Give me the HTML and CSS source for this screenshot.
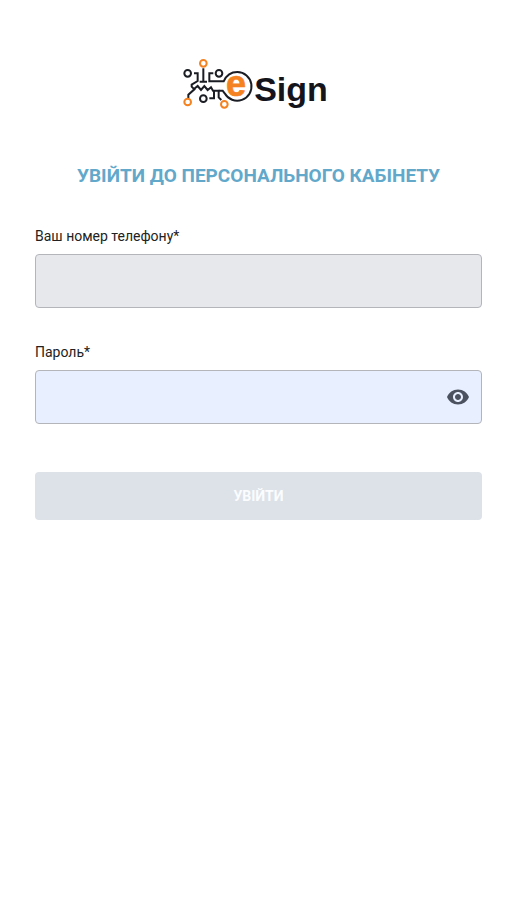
FILE: index.html
```html
<!DOCTYPE html>
<html lang="uk">
<head>
<meta charset="utf-8">
<meta name="viewport" content="width=device-width, initial-scale=1">
<title>eSign</title>
<link rel="stylesheet" href="styles.css">
</head>
<body>
<main class="login">
  <div class="logo">
    <svg class="logo-mark" viewBox="21 15 216 165" aria-hidden="true">
      <g class="trace">
        <circle cx="38" cy="70" r="10"/>
        <circle cx="132" cy="70" r="10"/>
        <circle cx="85" cy="146" r="10"/>
        <path d="M57 70H68V93L50 104V110L58 118L40 134V145"/>
        <path d="M57 117L68 108L78 120L88 108L98 120L108 112L114 122H131V142L139 150"/>
        <path d="M85 55V94M74 95H96"/>
        <path d="M115 70H103V94H146C154 76 168 66 187 66A43 43 0 1 1 149 130L143 122H131"/>
        <path d="M117 122V145H103"/>
      </g>
      <g class="node">
        <circle cx="85" cy="40" r="10"/>
        <circle cx="38" cy="156" r="10"/>
        <circle cx="148" cy="163" r="10"/>
      </g>
      <text class="logo-e" x="183" y="137" text-anchor="middle">e</text>
    </svg>
    <span class="logo-text">Sign</span>
  </div>
  <h1 class="title">УВІЙТИ ДО ПЕРСОНАЛЬНОГО КАБІНЕТУ</h1>
  <form class="form">
    <div class="field">
      <label for="phone">Ваш номер телефону*</label>
      <input class="input" id="phone" type="tel">
    </div>
    <div class="field">
      <label for="password">Пароль*</label>
      <div class="password">
        <input class="input input-filled" id="password" type="password">
        <button class="reveal" type="button" aria-label="Показати пароль">
          <svg viewBox="0 0 24 24" aria-hidden="true"><path d="M12 4.500C7 4.500 2.730 7.610 1 12c1.730 4.390 6 7.500 11 7.500s9.270-3.110 11-7.500c-1.730-4.390-6-7.500-11-7.500zM12 17c-2.760 0-5-2.240-5-5s2.240-5 5-5 5 2.240 5 5-2.240 5-5 5zm0-8c-1.660 0-3 1.340-3 3s1.340 3 3 3 3-1.340 3-3-1.340-3-3-3z"/></svg>
        </button>
      </div>
    </div>
    <button class="submit" type="submit">УВІЙТИ</button>
  </form>
</main>
</body>
</html>
```
FILE: styles.css
```css
* {
  box-sizing: border-box;
}

body {
  margin: 0;
  background: #fff;
  color: #222;
  font-family: Roboto, "Liberation Sans", sans-serif;
}

.login {
  padding: 55px 33px 32px 35px;
}

.logo {
  display: flex;
  justify-content: center;
  align-items: center;
  padding-right: 7px;
}

.logo-mark {
  width: 72px;
  height: 55px;
}

.trace,
.node {
  fill: none;
  stroke: #1b1d24;
  stroke-width: 6;
}

.node {
  stroke: #f58220;
}

.logo-e {
  fill: #f58220;
  font: bold 108px "Liberation Sans", sans-serif;
  stroke: #f58220;
  stroke-width: 2;
}

.logo-text {
  padding-top: 12px;
  color: #14151c;
  font: bold 34px/40px "Liberation Sans", sans-serif;
}

.title {
  margin: 54px 0 0;
  color: #62a8cb;
  font-size: 19px;
  font-weight: 700;
  line-height: 24px;
  text-align: center;
}

.form {
  display: flex;
  flex-direction: column;
  margin-top: 39px;
}

.field {
  margin-bottom: 35px;
}

.field label {
  display: block;
  margin-bottom: 8px;
  font-size: 14px;
  line-height: 19px;
}

.input {
  display: block;
  width: 100%;
  height: 54px;
  padding: 0 16px;
  border: 1px solid #b3b5ba;
  border-radius: 4px;
  background: #e6e8ec;
  font: inherit;
}

.password {
  position: relative;
}

.input-filled {
  padding-right: 48px;
  background: #e8effe;
}

.reveal {
  position: absolute;
  top: 0;
  right: 12px;
  bottom: 0;
  display: flex;
  align-items: center;
  padding: 0;
  border: 0;
  background: none;
}

.reveal svg {
  width: 24px;
  height: 24px;
  fill: #4c5260;
}

.submit {
  height: 48px;
  margin-top: 13px;
  border: 0;
  border-radius: 4px;
  background: #dde2e8;
  color: #fafcfe;
  font-family: inherit;
  font-size: 14px;
  font-weight: 700;
}
```
